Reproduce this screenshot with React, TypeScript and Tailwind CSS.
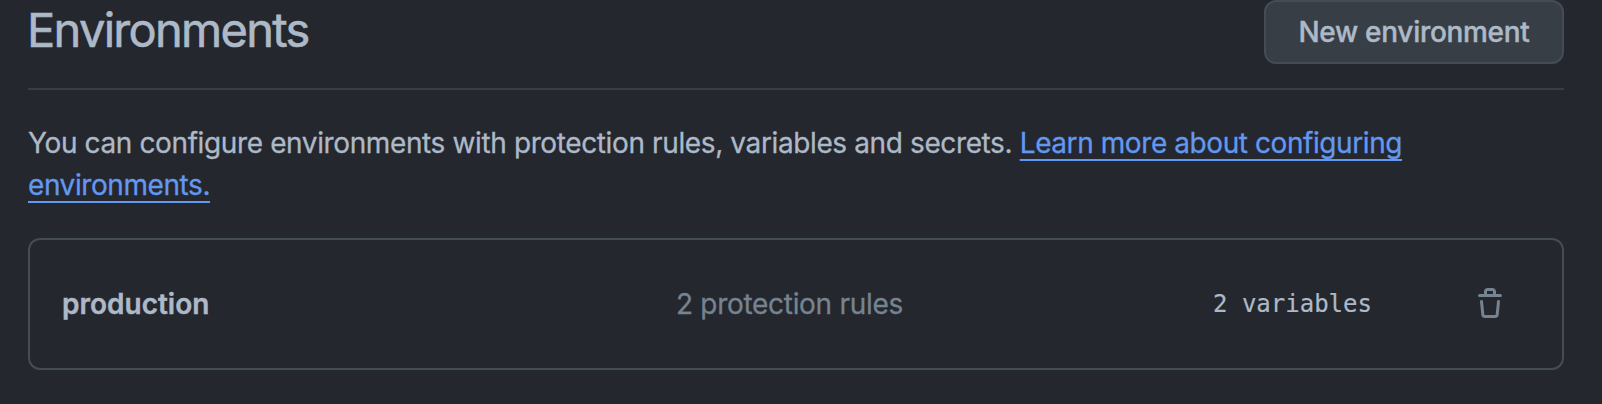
const TrashIcon = () => (
  <svg viewBox="0 0 16 16" className="size-8 fill-[#768390]" aria-hidden="true">
    <path d="M11 1.75V3h2.25a.75.75 0 0 1 0 1.5H2.75a.75.75 0 0 1 0-1.5H5V1.75C5 .784 5.784 0 6.75 0h2.5C10.216 0 11 .784 11 1.75ZM4.496 6.675l.66 6.6a.25.25 0 0 0 .249.225h5.19a.25.25 0 0 0 .249-.225l.66-6.6a.75.75 0 0 1 1.492.149l-.66 6.6A1.748 1.748 0 0 1 10.595 15h-5.19a1.75 1.75 0 0 1-1.741-1.575l-.66-6.6a.75.75 0 1 1 1.492-.15ZM6.5 1.75V3h3V1.75a.25.25 0 0 0-.25-.25h-2.5a.25.25 0 0 0-.25.25Z" />
  </svg>
);

export default function App() {
  return (
    <main className="h-[404px] w-full overflow-hidden bg-[#24272e] pl-7 pr-[38px] font-[Inter,sans-serif] text-[28px] text-[#adb9c7]">
      <header className="flex h-[90px] items-start justify-between border-b-2 border-[#373e47]">
        <h1 className="-ml-px text-[47px] leading-[60px] tracking-[-1.7px] [-webkit-text-stroke:0.6px_#adb9c7]">
          Environments
        </h1>
        <button className="h-16 w-[300px] rounded-xl border-2 border-[#444c56] bg-[#373e46] font-medium tracking-[-0.3px] [-webkit-text-stroke:0.4px_#adb9c7]">
          New environment
        </button>
      </header>
      <p className="pt-8 leading-[42px] tracking-[-0.38px] [-webkit-text-stroke:0.3px_currentColor]">
        You can configure environments with protection rules, variables and secrets.{" "}
        <a
          href="#"
          className="tracking-[-0.42px] text-[#6398f0] underline decoration-2 underline-offset-[6px] [text-decoration-skip-ink:none]"
        >
          Learn more about configuring
          <br />
          environments.
        </a>
      </p>
      <section className="mt-8 flex h-[132px] items-center rounded-xl border-2 border-[#444c56] pl-8 pr-14">
        <strong className="w-[614px] font-semibold [-webkit-text-stroke:0.4px_#adb9c7]">production</strong>
        <span className="w-[537px] tracking-[-0.3px] text-[#768390] [-webkit-text-stroke:0.3px_#768390]">2 protection rules</span>
        <code className="flex-1 font-['DejaVu_Sans_Mono',monospace] text-[24px] [-webkit-text-stroke:0.2px_#adb9c7]">
          2 variables
        </code>
        <button aria-label="Delete production">
          <TrashIcon />
        </button>
      </section>
    </main>
  );
}
